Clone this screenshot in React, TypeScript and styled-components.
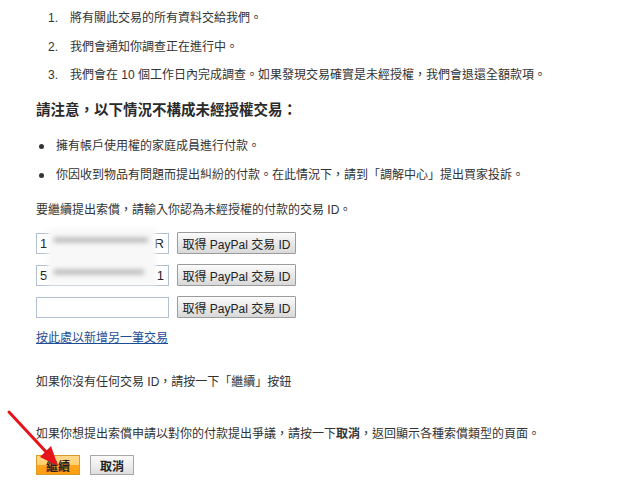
import React from 'react';
import styled, { createGlobalStyle } from 'styled-components';

const fontStack = '"Liberation Sans", "Noto Sans CJK TC", Arial, sans-serif';

const GlobalStyle = createGlobalStyle`
  html, body {
    margin: 0;
    padding: 0;
    background: #ffffff;
  }

  body {
    font-family: ${fontStack};
    font-size: 12px;
    color: #333333;
  }
`;

const Page = styled.div`
  position: relative;
  width: 640px;
  height: 503px;
  padding: 4px 0 0 36px;
  box-sizing: border-box;
  overflow: hidden;
`;

const StepList = styled.ol`
  list-style: none;
  margin: 0;
  padding: 0 0 0 12px;
`;

const Step = styled.li`
  display: flex;
  line-height: 28.5px;
`;

const StepNumber = styled.span`
  width: 22px;
  flex: none;
`;

const Heading = styled.h2`
  margin: 10.5px 0 0;
  font-size: 14.5px;
  line-height: 20px;
  font-weight: bold;
  color: #2a2a2a;
`;

const BulletList = styled.ul`
  list-style: none;
  margin: 11.5px 0 0;
  padding: 0;
`;

const Bullet = styled.li`
  display: flex;
  align-items: center;
  line-height: 29px;

  &::before {
    content: '';
    width: 5px;
    height: 5px;
    margin: 0 12px 0 3px;
    border-radius: 50%;
    background: #333333;
    flex: none;
  }
`;

const Paragraph = styled.p<{ $top: number }>`
  margin: ${(p) => p.$top}px 0 0;
  line-height: 16px;
`;

const IdRows = styled.div`
  position: relative;
  display: flex;
  flex-direction: column;
  gap: 10px;
  margin-top: 14px;
`;

const IdRow = styled.div`
  display: flex;
  align-items: center;
  gap: 8px;
  height: 22px;
`;

const IdBox = styled.div`
  display: flex;
  justify-content: space-between;
  align-items: center;
  width: 133px;
  height: 21px;
  padding: 0 4px 0 3px;
  box-sizing: border-box;
  border: 1px solid #b3c0d2;
  background: #ffffff;
  font-size: 13px;
  color: #222222;
`;

const Redaction = styled.div`
  position: absolute;
  left: 12px;
  top: -4px;
  width: 108px;
  height: 57px;
  background: #f8f8f8;
  filter: blur(2px);
  display: flex;
  flex-direction: column;
  justify-content: space-between;
  padding: 10px 8px 11px 6px;
  box-sizing: border-box;
`;

const Smudge = styled.div<{ $w: number }>`
  height: 4px;
  width: ${(p) => p.$w}px;
  background: #a8a8a8;
  filter: blur(1.5px);
`;

const GrayButton = styled.button`
  width: 119px;
  height: 22px;
  padding: 0;
  font-family: ${fontStack};
  font-size: 12px;
  color: #222222;
  border: 1px solid #9b9b9b;
  border-radius: 1px;
  background: linear-gradient(#fbfbfb, #e9e9e9 50%, #d9d9d9);
  cursor: pointer;
`;

const AddLink = styled.a`
  display: inline-block;
  margin-top: 12px;
  line-height: 16px;
  color: #1d4d94;
  text-decoration: underline;
`;

const Actions = styled.div`
  display: flex;
  gap: 10px;
  margin-top: 13px;
`;

const ActionButton = styled.button<{ $primary?: boolean }>`
  width: 44px;
  height: 20px;
  padding: 0;
  font-family: ${fontStack};
  font-size: 12px;
  font-weight: bold;
  color: #222222;
  border: 1px solid ${(p) => (p.$primary ? '#d89a2a' : '#a8a8a8')};
  background: ${(p) =>
    p.$primary
      ? 'linear-gradient(#ffd98c, #ffcf6e 50%, #ffa51f 51%, #ff9f10)'
      : 'linear-gradient(#fafafa, #eeeeee 50%, #dedede)'};
  cursor: pointer;
`;

const Arrow = styled.svg`
  position: absolute;
  left: 0;
  top: 400px;
  width: 80px;
  height: 80px;
  pointer-events: none;
`;

const steps = [
  '將有關此交易的所有資料交給我們。',
  '我們會通知你調查正在進行中。',
  '我們會在 10 個工作日內完成調查。如果發現交易確實是未經授權，我們會退還全額款項。',
];

const exclusions = [
  '擁有帳戶使用權的家庭成員進行付款。',
  '你因收到物品有問題而提出糾紛的付款。在此情況下，請到「調解中心」提出買家投訴。',
];

const ids = [
  { first: '1', last: 'R' },
  { first: '5', last: '1' },
  { first: '', last: '' },
];

export default function App() {
  return (
    <>
      <GlobalStyle />
      <Page>
        <StepList>
          {steps.map((text, i) => (
            <Step key={i}>
              <StepNumber>{i + 1}.</StepNumber>
              <span>{text}</span>
            </Step>
          ))}
        </StepList>

        <Heading>請注意，以下情況不構成未經授權交易：</Heading>

        <BulletList>
          {exclusions.map((text) => (
            <Bullet key={text}>{text}</Bullet>
          ))}
        </BulletList>

        <Paragraph $top={12.5}>要繼續提出索償，請輸入你認為未經授權的付款的交易 ID。</Paragraph>

        <IdRows>
          {ids.map((id, i) => (
            <IdRow key={i}>
              <IdBox>
                <span>{id.first}</span>
                <span>{id.last}</span>
              </IdBox>
              <GrayButton>取得 PayPal 交易 ID</GrayButton>
            </IdRow>
          ))}
          <Redaction>
            <Smudge $w={94} />
            <Smudge $w={90} />
          </Redaction>
        </IdRows>

        <AddLink href="#">按此處以新增另一筆交易</AddLink>

        <Paragraph $top={28}>如果你沒有任何交易 ID，請按一下「繼續」按鈕</Paragraph>

        <Paragraph $top={36}>
          如果你想提出索償申請以對你的付款提出爭議，請按一下<b>取消</b>，返回顯示各種索償類型的頁面。
        </Paragraph>

        <Actions>
          <ActionButton $primary>繼續</ActionButton>
          <ActionButton>取消</ActionButton>
        </Actions>

        <Arrow viewBox="0 400 80 80">
          <line x1="9" y1="412" x2="49" y2="455" stroke="#e5141b" strokeWidth="3" strokeLinecap="round" />
          <polygon points="58,466 40,457 51,446" fill="#e5141b" />
        </Arrow>
      </Page>
    </>
  );
}
